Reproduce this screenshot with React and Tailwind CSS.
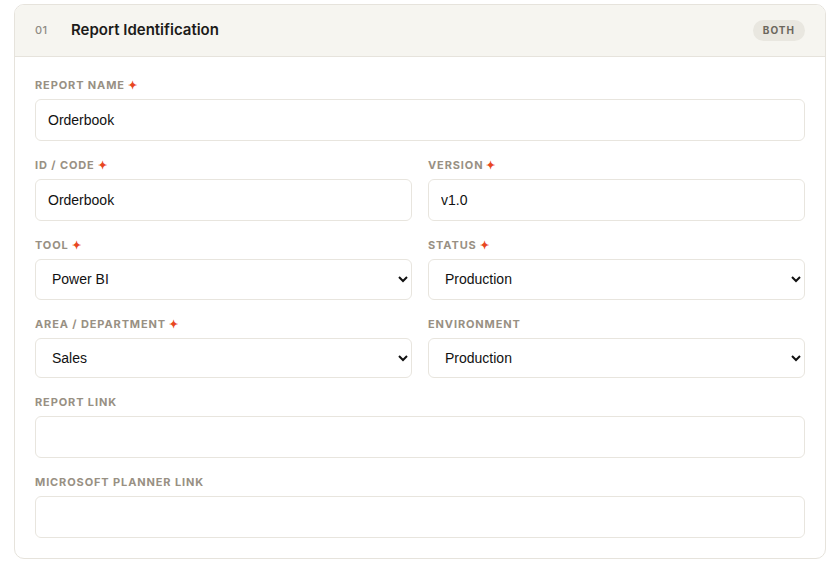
import { useState } from 'react';

const Req = () => <span className="ml-[3px] text-[#e8461f]">✦</span>;

const Label = ({ children, required }) => (
  <label className="mb-1.5 flex h-4 items-center text-[11px] font-bold uppercase leading-4 tracking-[0.08em] text-[#989083]">
    {children}
    {required && <Req />}
  </label>
);

// form controls keep the browser's default Arial-like face
const inputCls =
  "h-[42px] w-full rounded-md border border-[#e8e5de] bg-white px-3 font-['Liberation_Sans',Arial,sans-serif] text-sm text-[#111] outline-none";
const selectCls =
  "h-[40.5px] w-full rounded-md border border-[#e8e5de] bg-white px-3 font-['Liberation_Sans',Arial,sans-serif] text-sm text-[#111] outline-none";

const TextField = ({ label, required, value }) => {
  const [v, setV] = useState(value || '');
  return (
    <div>
      <Label required={required}>{label}</Label>
      <input className={inputCls} value={v} onChange={(e) => setV(e.target.value)} />
    </div>
  );
};

const SelectField = ({ label, required, value, options }) => (
  <div>
    <Label required={required}>{label}</Label>
    <select className={selectCls} defaultValue={value}>
      {options.map((o) => (
        <option key={o}>{o}</option>
      ))}
    </select>
  </div>
);

export default function App() {
  return (
    <div className="min-h-screen bg-white pl-[14px] pr-[5px] pt-1 font-['Inter',sans-serif]">
      <div className="overflow-hidden rounded-[10px] border border-[#e6e3dc] bg-white">
        <div className="flex h-[52px] items-center border-b border-[#e6e3dc] bg-[#f6f5f0] px-5">
          <span className="w-9 text-[11px] font-medium tracking-wide text-[#8f8b84]">01</span>
          <h2 className="text-[15px] font-semibold text-[#1c1b19]">Report Identification</h2>
          <span className="ml-auto rounded-full bg-[#e9e7e0] px-2.5 py-[3px] text-[10px] font-bold tracking-[0.1em] text-[#6b665c]">
            BOTH
          </span>
        </div>
        <div className="flex flex-col gap-4 px-5 pb-5 pt-5">
          <TextField label="Report Name" required value="Orderbook" />
          <div className="grid grid-cols-2 gap-4">
            <TextField label="ID / Code" required value="Orderbook" />
            <TextField label="Version" required value="v1.0" />
          </div>
          <div className="grid grid-cols-2 gap-4">
            <SelectField label="Tool" required value="Power BI" options={['Power BI', 'Tableau', 'Excel']} />
            <SelectField label="Status" required value="Production" options={['Production', 'Development', 'Retired']} />
          </div>
          <div className="grid grid-cols-2 gap-4">
            <SelectField label="Area / Department" required value="Sales" options={['Sales', 'Finance', 'Operations']} />
            <SelectField label="Environment" value="Production" options={['Production', 'Test', 'Development']} />
          </div>
          <TextField label="Report Link" />
          <TextField label="Microsoft Planner Link" />
        </div>
      </div>
    </div>
  );
}
